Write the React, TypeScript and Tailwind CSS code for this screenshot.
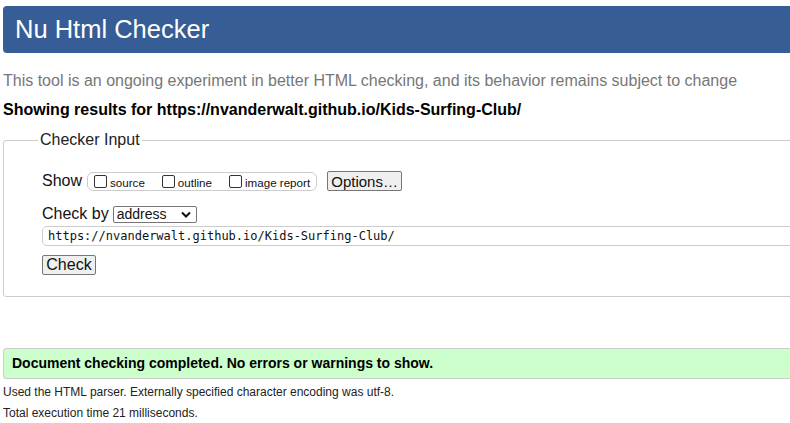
import { useState } from 'react';

function CheckBox({ label }: { label: string }) {
  const [on, setOn] = useState(false);
  return (
    <label className="flex items-center cursor-pointer">
      <span
        onClick={() => setOn(!on)}
        className="w-[13px] h-[13px] border border-[#333] rounded-[2px] bg-white mr-[3px]"
      />
      <span className="text-[11.6px] leading-[14px] mt-[3px]">{label}</span>
    </label>
  );
}

function App() {
  const [url, setUrl] = useState('https://nvanderwalt.github.io/Kids-Surfing-Club/');
  return (
    <div className="w-[790px] h-[423px] overflow-hidden bg-white font-['Liberation_Sans',Arial,sans-serif] text-[#111]">
      <div className="w-[840px] pl-[3px]">
        <div className="mt-[6px] h-[47px] bg-[#365d95] rounded-[4px] flex items-center pl-[12px]">
          <h1 className="text-white text-[25.5px] leading-none">Nu Html Checker</h1>
        </div>

        <p className="mt-[19px] text-[16px] leading-[18px] text-[#777]">
          This tool is an ongoing experiment in better HTML checking, and its behavior remains subject to change
        </p>
        <p className="mt-[11px] text-[16px] leading-[18px] font-bold text-black">
          Showing results for https://nvanderwalt.github.io/Kids-Surfing-Club/
        </p>

        <fieldset className="mt-[12px] border border-[#ccc] rounded-[3px] pl-[38px] pb-[20px] h-[166px]">
          <legend className="-ml-[4px] px-[2px] text-[16px] leading-[18px] text-[#222]">Checker Input</legend>

          <div className="flex items-center mt-[22px] h-[20px]">
            <span className="text-[16px] mr-[5px]">Show</span>
            <div className="flex items-center h-[19px] border border-[#ccc] rounded-[6px] pl-[6px] pr-[6px] gap-[17px]">
              <CheckBox label="source" />
              <CheckBox label="outline" />
              <CheckBox label="image report" />
            </div>
            <button className="ml-[10px] h-[20px] w-[75px] bg-[#efefef] border border-[#767676] rounded-[2px] text-[15px] leading-none">
              Options…
            </button>
          </div>

          <div className="flex items-center mt-[14px] h-[18px]">
            <span className="text-[16px] mr-[4px]">Check by</span>
            <div className="flex items-center justify-between w-[84px] h-[17px] border border-[#767676] rounded-[2px] pl-[3px] pr-[5px]">
              <span className="text-[14px] leading-none">address</span>
              <svg width="10" height="7" viewBox="0 0 10 7">
                <path d="M1 1.5 L5 5.5 L9 1.5" stroke="#111" strokeWidth="2" fill="none" />
              </svg>
            </div>
          </div>

          <input
            value={url}
            onChange={(e) => setUrl(e.target.value)}
            className="mt-[3px] block w-[800px] h-[20px] border border-[#ccc] rounded-[5px] px-[5px] font-['DejaVu_Sans_Mono',monospace] text-[12px] text-[#111] outline-none"
          />

          <button className="mt-[9px] block h-[20px] w-[54px] bg-[#efefef] border border-[#767676] rounded-[2px] text-[16px] leading-none">
            Check
          </button>
        </fieldset>

        <div className="mt-[51px] h-[31px] bg-[#ccffcc] border border-[#ccc] rounded-[3px] flex items-center pl-[8px]">
          <span className="text-[14px] font-bold text-black">Document checking completed. No errors or warnings to show.</span>
        </div>

        <p className="mt-[6px] text-[12px] leading-[14px] text-[#222]">
          Used the HTML parser. Externally specified character encoding was utf-8.
        </p>
        <p className="mt-[7px] text-[12px] leading-[14px] text-[#222]">Total execution time 21 milliseconds.</p>
      </div>
    </div>
  );
}

export default App;
